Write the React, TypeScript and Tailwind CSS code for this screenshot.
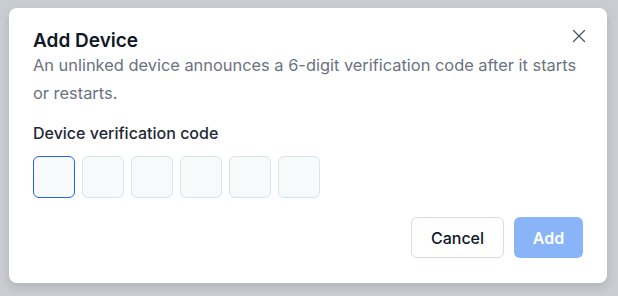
import React from 'react';
import { X } from 'lucide-react';

const App: React.FC = () => {
  const digits = [0, 1, 2, 3, 4, 5];

  return (
    <div className="w-[618px] h-[296px] bg-[#c9ccd0] pt-2 pl-[9px] font-['Inter',sans-serif]">
      <div className="w-[598px] h-[275px] bg-white rounded-lg shadow-[0_4px_10px_rgba(0,0,0,0.12)] px-6 pt-[21px] pb-[25px] flex flex-col">
        {/* header */}
        <div className="flex items-start justify-between">
          <h2 className="text-[19px] leading-6 font-semibold text-[#111827]">Add Device</h2>
          <button className="-mt-[4px] -mr-[7px] text-[#4b5563]">
            <X size={22} strokeWidth={1.4} />
          </button>
        </div>
        <p className="-mt-[2px] text-[16.4px] leading-7 text-[#6b7280]">
          An unlinked device announces a 6-digit verification code after it starts or restarts.
        </p>

        {/* code */}
        <label className="mt-[14px] text-[16px] leading-6 font-medium text-[#1f2937]">
          Device verification code
        </label>
        <div className="mt-[11px] flex gap-[7px]">
          {digits.map((d) => (
            <input
              key={d}
              maxLength={1}
              className={
                d === 0
                  ? 'w-[42px] h-[42px] rounded-md bg-[#f7fafb] border border-[#2563eb] outline-none'
                  : 'w-[42px] h-[42px] rounded-md bg-[#f7fafb] border border-[#dde2e7] outline-none'
              }
            />
          ))}
        </div>

        {/* actions */}
        <div className="mt-auto flex justify-end gap-[10px]">
          <button className="w-[93px] h-[41px] rounded-md border border-[#d7dde4] bg-white text-[16px] font-medium text-[#111827]">
            Cancel
          </button>
          <button className="w-[69px] h-[41px] rounded-md bg-[#8ab4f8] text-[16px] font-semibold text-white">
            Add
          </button>
        </div>
      </div>
    </div>
  );
};

export default App;
